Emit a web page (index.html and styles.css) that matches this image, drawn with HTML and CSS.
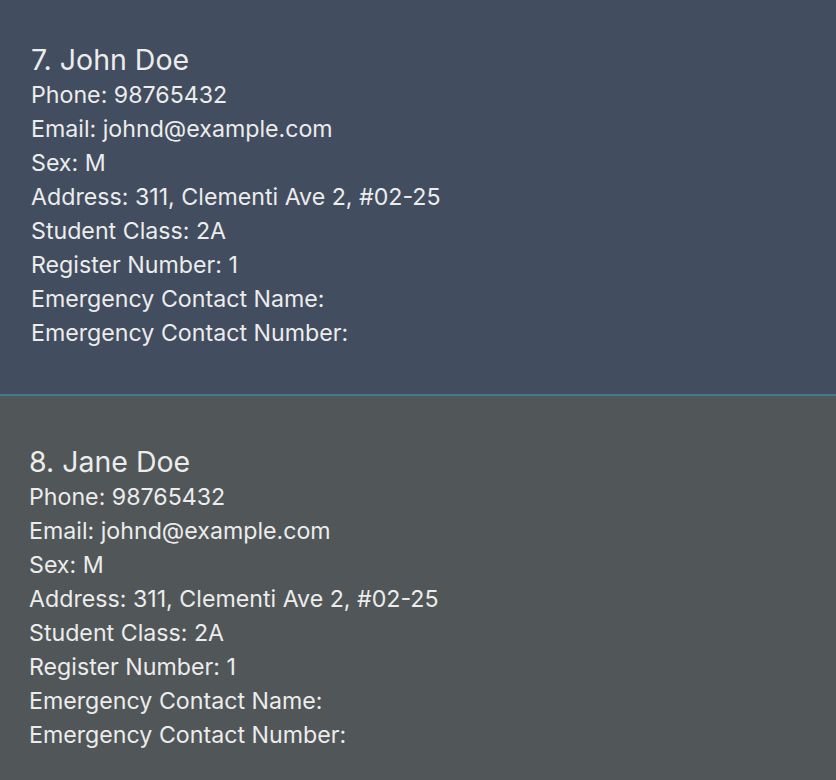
FILE: index.html
```html
<!DOCTYPE html>
<html>
<head>
<meta charset="utf-8">
<link rel="stylesheet" href="styles.css">
</head>
<body>
<div class="list">
  <div class="card card-selected">
    <div class="name">7. John Doe</div>
    <div class="field">Phone: 98765432</div>
    <div class="field">Email: johnd@example.com</div>
    <div class="field">Sex: M</div>
    <div class="field">Address: 311, Clementi Ave 2, #02-25</div>
    <div class="field">Student Class: 2A</div>
    <div class="field">Register Number: 1</div>
    <div class="field">Emergency Contact Name:</div>
    <div class="field">Emergency Contact Number:</div>
  </div>
  <div class="card card-odd">
    <div class="name">8. Jane Doe</div>
    <div class="field">Phone: 98765432</div>
    <div class="field">Email: johnd@example.com</div>
    <div class="field">Sex: M</div>
    <div class="field">Address: 311, Clementi Ave 2, #02-25</div>
    <div class="field">Student Class: 2A</div>
    <div class="field">Register Number: 1</div>
    <div class="field">Emergency Contact Name:</div>
    <div class="field">Emergency Contact Number:</div>
  </div>
</div>
</body>
</html>
```

FILE: styles.css
```css
html, body {
  margin: 0;
  padding: 0;
  background: #515658;
  overflow: hidden;
}
.list {
  display: flex;
  flex-direction: column;
  margin-top: -6px;
  font-family: Inter, "Noto Sans", sans-serif;
  color: #ececec;
}
.card {
  display: flex;
  flex-direction: column;
  height: 402px;
  box-sizing: border-box;
}
.card-selected {
  background: #424d5f;
  border-bottom: 2px solid #3e7b91;
  padding: 48px 0 0 31px;
}
.card-odd {
  background: #515658;
  padding: 48px 0 0 29px;
}
.name {
  font-size: 28.5px;
  line-height: 36px;
  height: 36px;
}
.field {
  font-size: 23.2px;
  line-height: 34px;
}
```
